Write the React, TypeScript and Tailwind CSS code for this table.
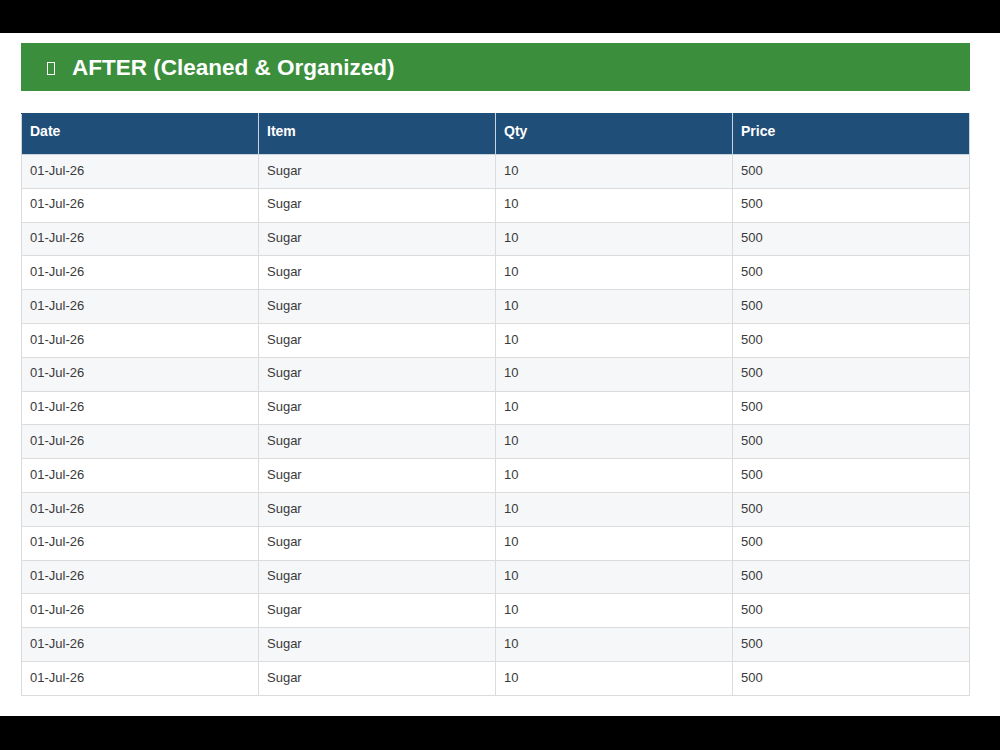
const rows = Array.from({ length: 16 }, (_, i) => ({
  id: i,
  date: "01-Jul-26",
  item: "Sugar",
  qty: "10",
  price: "500",
}));

const headers = ["Date", "Item", "Qty", "Price"];

const App = () => {
  return (
    <div
      className="w-[1000px] h-[750px] bg-black flex flex-col"
      style={{ fontFamily: '"Liberation Sans", Arial, sans-serif' }}
    >
      {/* top band */}
      <div className="h-[33px] shrink-0" />
      {/* page */}
      <div className="h-[683px] bg-white pl-[21px] pr-[30px] pt-[10px]">
        <div className="h-[48px] bg-[#3b8f3c] flex items-center pl-[26px] pt-[2px] text-white">
          <span className="inline-block w-[8px] h-[13px] border border-white mr-[17px]" />
          <span className="text-[22.5px] font-bold">
            AFTER (Cleaned &amp; Organized)
          </span>
        </div>
        <table className="w-full mt-[22px] border-collapse table-fixed">
          <thead>
            <tr className="bg-[#1f4e79] h-[41px]">
              {headers.map((h) => (
                <th
                  key={h}
                  className="text-left text-[14px] font-bold text-white pl-[8px] pb-[6px] border border-[#c9d3de] border-t-[#1f4e79]"
                >
                  {h}
                </th>
              ))}
            </tr>
          </thead>
          <tbody>
            {rows.map((r) => (
              <tr
                key={r.id}
                className={`h-[33.8px] ${r.id % 2 === 0 ? "bg-[#f6f7f9]" : "bg-white"}`}
              >
                {[r.date, r.item, r.qty, r.price].map((v, j) => (
                  <td
                    key={j}
                    className="text-[13px] text-[#3a3a3a] pl-[8px] pb-[2px] border border-[#dcdcdc]"
                  >
                    {v}
                  </td>
                ))}
              </tr>
            ))}
          </tbody>
        </table>
      </div>
    </div>
  );
};

export default App;
